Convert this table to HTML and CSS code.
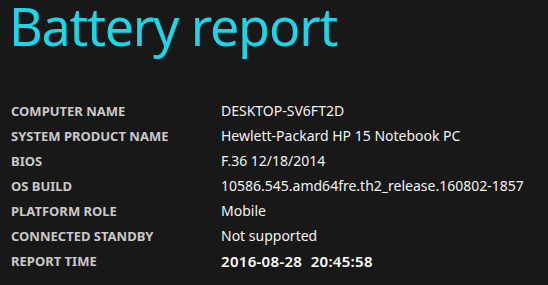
FILE: index.html
```html
<!DOCTYPE html>
<html lang="en">
<head>
<meta charset="utf-8">
<title>Battery report</title>
<link rel="stylesheet" href="styles.css">
</head>
<body>
<main class="report">
  <h1 class="report-title">Battery report</h1>
  <dl class="info">
    <dt class="info-label">Computer name</dt>
    <dd class="info-value">DESKTOP-SV6FT2D</dd>
    <dt class="info-label">System product name</dt>
    <dd class="info-value">Hewlett-Packard HP 15 Notebook PC</dd>
    <dt class="info-label">BIOS</dt>
    <dd class="info-value">F.36 12/18/2014</dd>
    <dt class="info-label">OS build</dt>
    <dd class="info-value">10586.545.amd64fre.th2_release.160802-1857</dd>
    <dt class="info-label">Platform role</dt>
    <dd class="info-value">Mobile</dd>
    <dt class="info-label">Connected standby</dt>
    <dd class="info-value">Not supported</dd>
    <dt class="info-label">Report time</dt>
    <dd class="info-value info-value--strong">2016-08-28&nbsp; 20:45:58</dd>
  </dl>
</main>
</body>
</html>
```
FILE: styles.css
```css
html, body {
  margin: 0;
  background: #181818;
}

.report {
  width: 548px;
  height: 285px;
  overflow: hidden;
  padding: 0 0 0 11px;
  box-sizing: border-box;
  font-family: "Noto Sans", "Open Sans", sans-serif;
}

/* tall line box so the descenders stay inside it */
.report-title {
  margin: -10px 0 0 -2px;
  padding: 0;
  font-weight: 400;
  font-size: 52px;
  line-height: 72px;
  color: #1ed4e6;
  letter-spacing: -1.2px;
}

.info {
  margin: 36px 0 0;
  display: grid;
  grid-template-columns: 210px auto;
  grid-auto-rows: 25px;
  align-items: center;
}

.info-label {
  margin: 0;
  font-size: 13px;
  font-weight: 700;
  text-transform: uppercase;
  color: #c9c9c9;
}

.info-value {
  margin: 0;
  font-size: 14px;
  color: #f2f2f2;
}

.info-value--strong {
  font-size: 15px;
  font-weight: 600;
  letter-spacing: 0.3px;
  color: #ffffff;
}
```
